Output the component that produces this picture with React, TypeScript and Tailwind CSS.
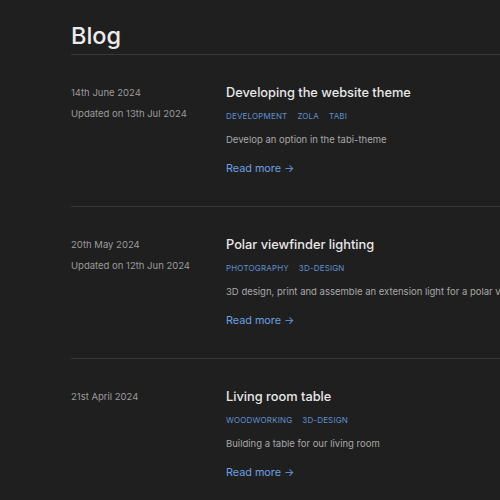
import React from 'react';

const posts = [
  {
    date: '14th June 2024',
    updated: 'Updated on 13th Jul 2024',
    title: 'Developing the website theme',
    tags: ['Development', 'Zola', 'Tabi'],
    summary: 'Develop an option in the tabi-theme',
  },
  {
    date: '20th May 2024',
    updated: 'Updated on 12th Jun 2024',
    title: 'Polar viewfinder lighting',
    tags: ['Photography', '3D-design'],
    summary: '3D design, print and assemble an extension light for a polar viewfinder on a star tracker mount',
  },
  {
    date: '21st April 2024',
    updated: null,
    title: 'Living room table',
    tags: ['Woodworking', '3D-design'],
    summary: 'Building a table for our living room',
  },
];

export default function App() {
  return (
    <div className="w-full h-[500px] overflow-hidden bg-[#1f1f1f] font-['Inter',sans-serif] antialiased">
      <main className="w-[800px] pl-[71px] pt-[20px]">
        <h1 className="text-[23.5px] leading-[32px] font-medium text-[#ececec] pb-[2px] border-b border-[#383838]">
          Blog
        </h1>
        <ul>
          {posts.map((post, i) => (
            <li key={i} className="flex pt-[28px] pb-[28px] border-b border-[#363636]">
              <div className="w-[155px] shrink-0 text-[9.5px] text-[#9c9c9c]">
                <div className="leading-[20px]">{post.date}</div>
                {post.updated && <div className="leading-[20px] mt-[1px]">{post.updated}</div>}
              </div>
              <div className="flex-1">
                <h2 className="text-[12.8px] leading-[18px] mt-[1px] font-medium text-[#e8e8e8]">{post.title}</h2>
                <div className="flex gap-[10px] mt-[8px] text-[8px] leading-[12px] uppercase tracking-[0.02em] text-[#5f8fcf]">
                  {post.tags.map((t) => (
                    <span key={t}>{t}</span>
                  ))}
                </div>
                <p className="mt-[10px] text-[9.5px] leading-[16px] text-[#a8a8a8] whitespace-nowrap">{post.summary}</p>
                <a className="block mt-[12px] text-[10.8px] leading-[18px] text-[#6c9fe0]">Read more →</a>
              </div>
            </li>
          ))}
        </ul>
      </main>
    </div>
  );
}
